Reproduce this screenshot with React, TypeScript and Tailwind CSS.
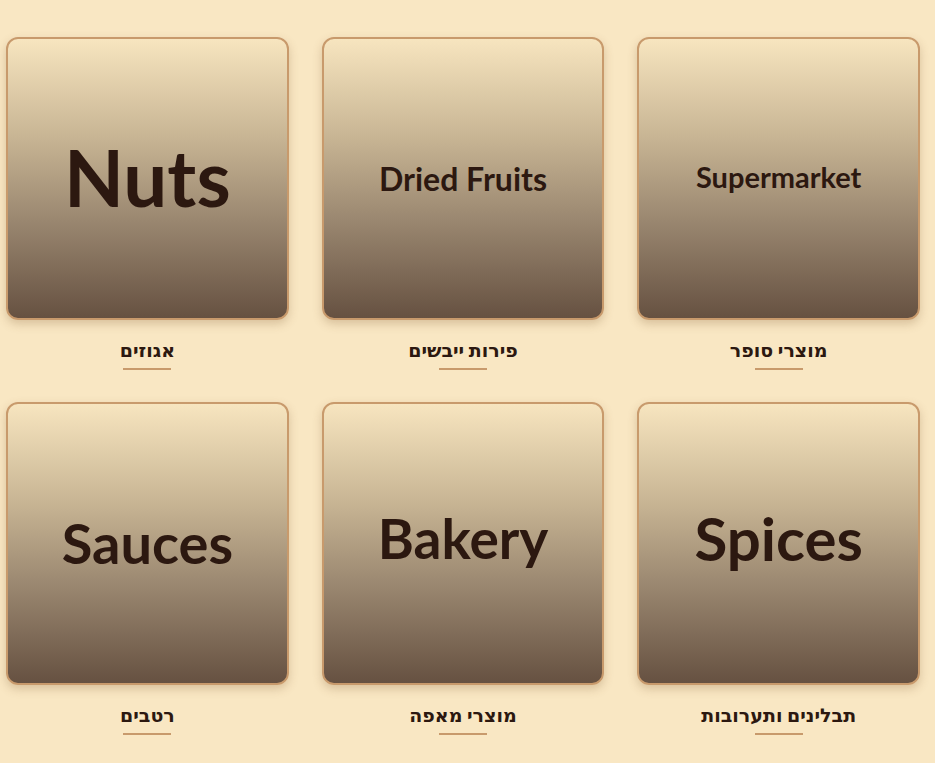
import React from "react";

const items = [
  { en: "Supermarket", he: "מוצרי סופר", size: "text-[29px] mb-[4px]" },
  { en: "Dried Fruits", he: "פירות ייבשים", size: "text-[32px] mb-0" },
  { en: "Nuts", he: "אגוזים", size: "text-[78px] mb-[3px]" },
  { en: "Spices", he: "תבלינים ותערובות", size: "text-[60px] mb-[12px]" },
  { en: "Bakery", he: "מוצרי מאפה", size: "text-[55px] mb-[10px]" },
  { en: "Sauces", he: "רטבים", size: "text-[56px] mb-[2px]" },
];

export default function App() {
  return (
    <div
      dir="rtl"
      className="min-h-[763px] w-full bg-[#f9e7c3] pt-[37px] pl-[6px] pr-[15px]"
      style={{ fontFamily: "Lato, 'DejaVu Sans', sans-serif" }}
    >
      <div className="grid grid-cols-3 gap-x-[33px] gap-y-[32px]">
        {items.map((it) => (
          <div key={it.en} className="flex flex-col items-center">
            <div className="flex h-[283px] w-full items-center justify-center rounded-[12px] border-2 border-[#c89a6c] bg-[linear-gradient(to_bottom,#f7e5bf_0%,#c8b594_35%,#9a8770_65%,#665141_100%)] shadow-[0_4px_10px_rgba(120,80,40,0.25)]">
              <span dir="ltr" className={`${it.size} font-bold leading-none text-[#2c1810]`}>
                {it.en}
              </span>
            </div>
            <div className="mt-[19px] text-[19px] font-bold leading-[22px] text-[#2c1810]">{it.he}</div>
            <div className="mt-[7px] h-[2px] w-[48px] bg-[#c89a6c]" />
          </div>
        ))}
      </div>
    </div>
  );
}
